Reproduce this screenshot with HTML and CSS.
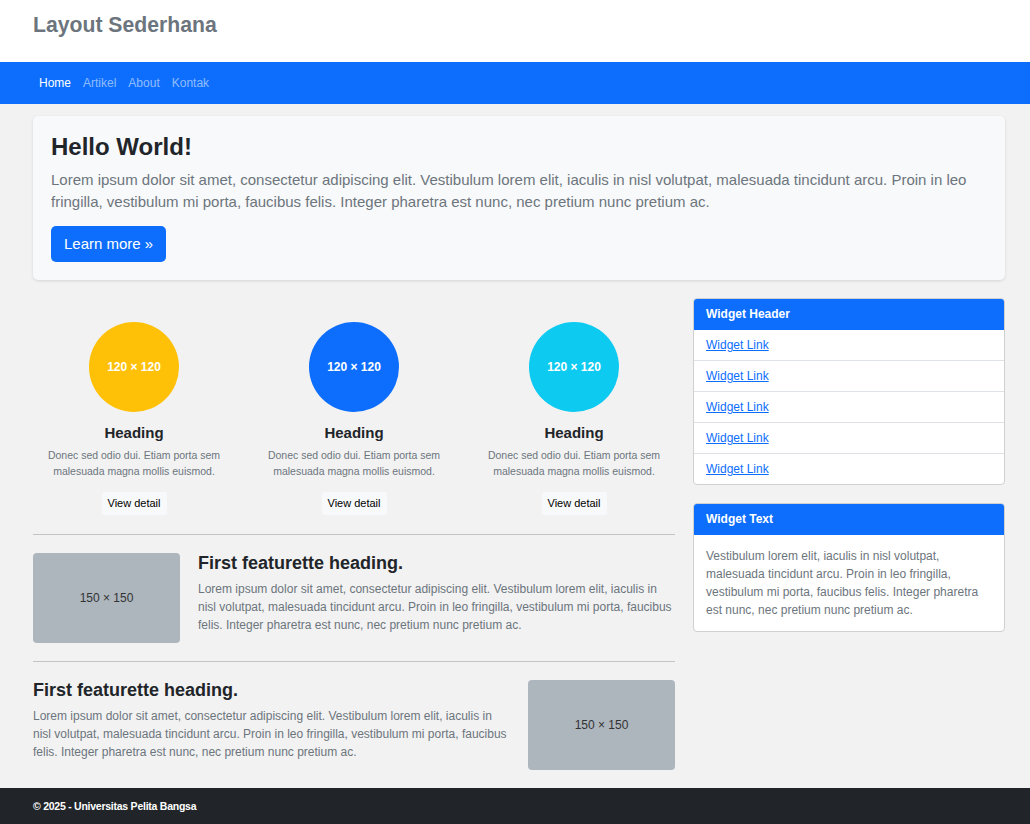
FILE: index.html
```html
<!DOCTYPE html>
<html lang="id">
<head>
<meta charset="utf-8">
<title>Layout Sederhana</title>
<link rel="stylesheet" href="styles.css">
</head>
<body>
<header class="site-header">
  <h1 class="site-title">Layout Sederhana</h1>
</header>
<nav class="navbar">
  <a class="nav-link active" href="#">Home</a>
  <a class="nav-link" href="#">Artikel</a>
  <a class="nav-link" href="#">About</a>
  <a class="nav-link" href="#">Kontak</a>
</nav>
<main class="container">
  <section class="jumbotron">
    <h1 class="jumbo-title">Hello World!</h1>
    <p class="jumbo-text">Lorem ipsum dolor sit amet, consectetur adipiscing elit. Vestibulum lorem elit, iaculis in nisl volutpat, malesuada tincidunt arcu. Proin in leo fringilla, vestibulum mi porta, faucibus felis. Integer pharetra est nunc, nec pretium nunc pretium ac.</p>
    <a class="btn-primary" href="#">Learn more &raquo;</a>
  </section>
  <div class="main-row">
    <div class="content">
      <div class="circles">
        <div class="circle-col">
          <div class="circle yellow">120 × 120</div>
          <h2 class="circle-heading">Heading</h2>
          <p class="circle-text">Donec sed odio dui. Etiam porta sem malesuada magna mollis euismod.</p>
          <a class="btn-light" href="#">View detail</a>
        </div>
        <div class="circle-col">
          <div class="circle blue">120 × 120</div>
          <h2 class="circle-heading">Heading</h2>
          <p class="circle-text">Donec sed odio dui. Etiam porta sem malesuada magna mollis euismod.</p>
          <a class="btn-light" href="#">View detail</a>
        </div>
        <div class="circle-col">
          <div class="circle cyan">120 × 120</div>
          <h2 class="circle-heading">Heading</h2>
          <p class="circle-text">Donec sed odio dui. Etiam porta sem malesuada magna mollis euismod.</p>
          <a class="btn-light" href="#">View detail</a>
        </div>
      </div>
      <hr class="divider">
      <div class="featurette">
        <div class="placeholder">150 × 150</div>
        <div class="feat-body">
          <h2 class="feat-heading">First featurette heading.</h2>
          <p class="feat-text">Lorem ipsum dolor sit amet, consectetur adipiscing elit. Vestibulum lorem elit, iaculis in nisl volutpat, malesuada tincidunt arcu. Proin in leo fringilla, vestibulum mi porta, faucibus felis. Integer pharetra est nunc, nec pretium nunc pretium ac.</p>
        </div>
      </div>
      <hr class="divider">
      <div class="featurette">
        <div class="feat-body">
          <h2 class="feat-heading">First featurette heading.</h2>
          <p class="feat-text">Lorem ipsum dolor sit amet, consectetur adipiscing elit. Vestibulum lorem elit, iaculis in nisl volutpat, malesuada tincidunt arcu. Proin in leo fringilla, vestibulum mi porta, faucibus felis. Integer pharetra est nunc, nec pretium nunc pretium ac.</p>
        </div>
        <div class="placeholder">150 × 150</div>
      </div>
    </div>
    <aside class="sidebar">
      <div class="widget">
        <div class="widget-header">Widget Header</div>
        <ul class="widget-list">
          <li><a href="#">Widget Link</a></li>
          <li><a href="#">Widget Link</a></li>
          <li><a href="#">Widget Link</a></li>
          <li><a href="#">Widget Link</a></li>
          <li><a href="#">Widget Link</a></li>
        </ul>
      </div>
      <div class="widget">
        <div class="widget-header">Widget Text</div>
        <p class="widget-body">Vestibulum lorem elit, iaculis in nisl volutpat, malesuada tincidunt arcu. Proin in leo fringilla, vestibulum mi porta, faucibus felis. Integer pharetra est nunc, nec pretium nunc pretium ac.</p>
      </div>
    </aside>
  </div>
</main>
<footer class="site-footer">&copy; 2025 - Universitas Pelita Bangsa</footer>
</body>
</html>
```
FILE: styles.css
```css
* { box-sizing: border-box; }
html, body { margin: 0; padding: 0; }
body {
  background: #f2f2f2;
  font-family: "Liberation Sans", Arial, sans-serif;
  color: #212529;
}
.site-header {
  background: #fff;
  height: 62px;
  padding: 13px 33px 0;
}
.site-title {
  margin: 0;
  font-size: 21.2px;
  line-height: 24px;
  font-weight: bold;
  color: #6c757d;
}
.navbar {
  background: #0d6efd;
  height: 42px;
  display: flex;
  align-items: center;
  padding: 0 33px;
}
.nav-link {
  font-size: 12px;
  line-height: 16px;
  padding: 0 6px;
  color: rgba(255,255,255,0.55);
  text-decoration: none;
}
.nav-link.active { color: #fff; }
.container {
  padding: 12px 25px 18px 33px;
}
.jumbotron {
  background: #f8f9fa;
  border-radius: 5px;
  box-shadow: 0 1px 3px rgba(0,0,0,0.12);
  padding: 16px 18px 18px;
}
.jumbo-title {
  margin: 0 0 8px;
  font-size: 24px;
  line-height: 29px;
  font-weight: bold;
  color: #212529;
}
.jumbo-text {
  margin: 0 0 13px;
  font-size: 15px;
  line-height: 22px;
  color: #6c757d;
}
.btn-primary {
  display: inline-block;
  background: #0d6efd;
  color: #fff;
  font-size: 15px;
  line-height: 20px;
  padding: 8px 13px;
  border-radius: 5px;
  text-decoration: none;
}
.main-row {
  display: grid;
  grid-template-columns: 642px 312px;
  gap: 18px;
  margin-top: 18px;
}
.circles {
  display: grid;
  grid-template-columns: repeat(3, 1fr);
  gap: 18px;
  padding: 24px 0 1px;
}
.circle-col {
  display: flex;
  flex-direction: column;
  align-items: center;
  text-align: center;
}
.circle {
  width: 90px;
  height: 90px;
  border-radius: 50%;
  display: flex;
  align-items: center;
  justify-content: center;
  color: #fff;
  font-size: 12px;
  font-weight: bold;
}
.circle.yellow { background: #ffc107; }
.circle.blue { background: #0d6efd; }
.circle.cyan { background: #0dcaf0; }
.circle-heading {
  margin: 12px 0 5px;
  font-size: 15px;
  line-height: 18px;
  font-weight: bold;
  color: #212529;
}
.circle-text {
  margin: 0 0 13px;
  font-size: 10.5px;
  line-height: 16px;
  color: #6c757d;
}
.btn-light {
  display: inline-block;
  background: #f8f9fa;
  color: #000;
  font-size: 11px;
  line-height: 15px;
  padding: 4px 6px;
  border-radius: 3px;
  text-decoration: none;
}
.divider {
  border: 0;
  border-top: 1px solid #c4c4c4;
  margin: 18px 0;
}
.featurette {
  display: flex;
  gap: 18px;
  align-items: flex-start;
}
.placeholder {
  flex: 0 0 147px;
  height: 90px;
  background: #adb5bd;
  border-radius: 4px;
  display: flex;
  align-items: center;
  justify-content: center;
  font-size: 12px;
  color: #333;
}
.feat-body { flex: 1; }
.feat-heading {
  margin: -1px 0 6px;
  font-size: 18px;
  line-height: 22px;
  font-weight: bold;
  color: #212529;
}
.feat-text {
  margin: 0;
  font-size: 12px;
  line-height: 18px;
  color: #6c757d;
}
.sidebar {
  display: flex;
  flex-direction: column;
  gap: 18px;
  align-items: stretch;
}
.widget {
  background: #fff;
  border: 1px solid #d0d0d0;
  border-radius: 4px;
  overflow: hidden;
}
.widget-header {
  background: #0d6efd;
  color: #fff;
  font-size: 12px;
  font-weight: bold;
  line-height: 16px;
  padding: 7px 12px 8px;
}
.widget-list {
  list-style: none;
  margin: 0;
  padding: 0;
}
.widget-list li {
  padding: 8px 12px;
  font-size: 12px;
  line-height: 14px;
}
.widget-list li + li { border-top: 1px solid #dee2e6; }
.widget-list a { color: #0d6efd; text-decoration: underline; }
.widget-body {
  margin: 0;
  padding: 12px 12px 12px;
  font-size: 12px;
  line-height: 18px;
  color: #6c757d;
}
.site-footer {
  background: #212529;
  color: #fff;
  height: 36px;
  padding: 0 33px;
  display: flex;
  align-items: center;
  font-size: 10.5px;
  font-weight: bold;
  letter-spacing: -0.25px;
}
```
